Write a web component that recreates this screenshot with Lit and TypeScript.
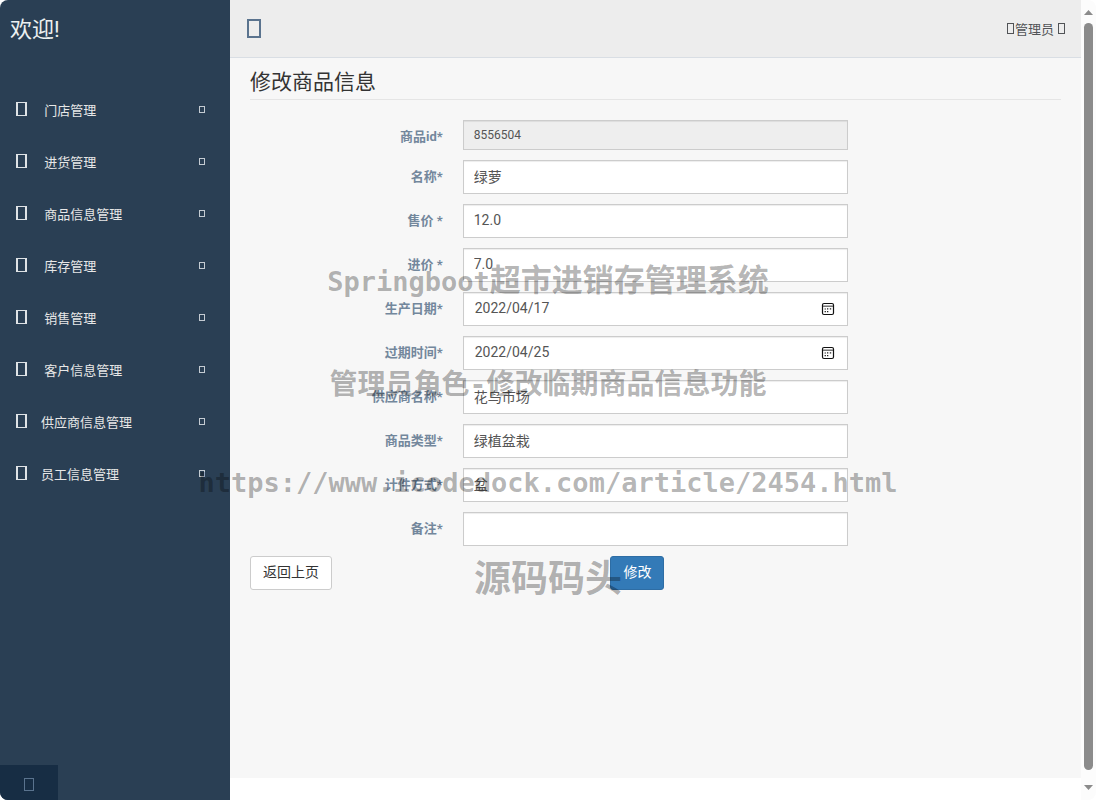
import { LitElement, html, css } from "lit";
import { customElement } from "lit/decorators.js";

interface Field {
  id: string;
  label: string;
  value: string;
  kind?: "readonly" | "date";
}

const MENU: string[] = [
  "\u00a0门店管理",
  "\u00a0进货管理",
  "\u00a0商品信息管理",
  "\u00a0库存管理",
  "\u00a0销售管理",
  "\u00a0客户信息管理",
  "供应商信息管理",
  "员工信息管理",
];

const FIELDS: Field[] = [
  { id: "goods-id", label: "商品id*", value: "8556504", kind: "readonly" },
  { id: "name", label: "名称*", value: "绿萝" },
  { id: "price", label: "售价 *", value: "12.0" },
  { id: "cost", label: "进价 *", value: "7.0" },
  { id: "made", label: "生产日期*", value: "2022/04/17", kind: "date" },
  { id: "expires", label: "过期时间*", value: "2022/04/25", kind: "date" },
  { id: "supplier", label: "供应商名称*", value: "花鸟市场" },
  { id: "category", label: "商品类型*", value: "绿植盆栽" },
  { id: "unit", label: "计件方式*", value: "盆" },
  { id: "remark", label: "备注*", value: "" },
];

const calendarIcon = html`<svg width="14" height="14" viewBox="0 0 14 14" aria-hidden="true">
  <rect x="1.5" y="1.5" width="11" height="11" rx="1.5" fill="none" stroke="#111" stroke-width="1.2" />
  <path d="M2 4.2h10" stroke="#666" stroke-width="1.4" />
  <path
    d="M6 6.2h1.3v1.3H6zM8.8 6.2h1.4v1.4H8.8zM3.6 6.4h1.3v1.1H3.6zM3.6 9h1.3v1.3H3.6zM6 9h1.3v1.3H6z"
    fill="#222"
  />
</svg>`;

@customElement("side-menu")
export class SideMenu extends LitElement {
  static styles = css`
    :host {
      display: flex;
      flex-direction: column;
      background: #2a3f54;
      color: #ecf0f1;
    }
    .brand {
      height: 58px;
      padding-left: 10px;
      font-size: 22px;
      line-height: 60px;
    }
    .menu {
      list-style: none;
      margin: 0;
      padding: 25px 0 0;
      flex: 1;
    }
    .link {
      display: flex;
      align-items: center;
      height: 52px;
      padding: 0 25px 0 16px;
      box-sizing: border-box;
      color: #e7e7e7;
      font-size: 13px;
      text-decoration: none;
    }
    .text {
      flex: 1;
      padding-left: 14px;
    }
    .glyph {
      box-sizing: border-box;
      width: 11px;
      height: 14px;
      border: 1px solid #dfe3e6;
      border-width: 1px 2px;
    }
    .caret {
      box-sizing: border-box;
      width: 6px;
      height: 7px;
      border: 1px solid #c4cbd2;
    }
    .tool {
      display: flex;
      align-items: center;
      justify-content: center;
      width: 25%;
      height: 35px;
      padding: 3px 0 0;
      border: 0;
      background: #172d44;
    }
    .tool-glyph {
      box-sizing: border-box;
      width: 10px;
      height: 13px;
      border: 1px solid #5a738e;
    }
  `;

  render() {
    return html`
      <div class="brand">欢迎!</div>
      <ul class="menu">
        ${MENU.map(
          (item) => html`<li>
            <a class="link" href="#"><span class="glyph"></span><span class="text">${item}</span><span class="caret"></span></a>
          </li>`
        )}
      </ul>
      <button class="tool" type="button" aria-label="退出"><span class="tool-glyph"></span></button>
    `;
  }
}

@customElement("goods-form")
export class GoodsForm extends LitElement {
  static styles = css`
    :host {
      display: block;
      padding: 0 20px;
    }
    .title {
      margin: 0 0 20px;
      padding: 8px 0 0;
      height: 33px;
      border-bottom: 1px solid #e5e5e5;
      color: #333;
      font-size: 21px;
      font-weight: 400;
      line-height: 32px;
    }
    .form {
      display: grid;
      gap: 10px;
    }
    .row {
      display: grid;
      grid-template-columns: 1fr 2fr 1fr;
    }
    .label {
      padding: 8px 10px 0;
      color: #73879c;
      font-size: 13px;
      font-weight: 700;
      line-height: 18px;
      text-align: right;
    }
    .control {
      display: grid;
      grid-template-columns: 1fr 40px;
      padding: 0 10px;
    }
    .input {
      grid-area: 1 / 1 / 2 / 3;
      box-sizing: border-box;
      width: 100%;
      height: 34px;
      margin: 0;
      padding: 0 10px 2px;
      border: 1px solid #ccc;
      border-radius: 0;
      background: #fff;
      box-shadow: inset 0 1px 1px rgba(0, 0, 0, 0.075);
      color: #555;
      font: inherit;
      font-size: 14px;
      line-height: 20px;
    }
    .readonly {
      height: 30px;
      padding-bottom: 0;
      background: #eee;
      font-size: 12px;
    }
    .date {
      padding-left: 11px;
    }
    .pick {
      grid-area: 1 / 2;
      z-index: 1;
      display: flex;
      align-items: center;
      justify-content: center;
      padding: 0;
      border: 0;
      background: none;
    }
    .actions {
      display: grid;
      grid-template-columns: 4fr 5fr;
      justify-items: start;
    }
    .button {
      height: 34px;
      padding: 0 12px 2px;
      border: 1px solid #ccc;
      border-radius: 3px;
      background: #fff;
      color: #333;
      font: inherit;
      font-size: 14px;
      line-height: 20px;
    }
    .primary {
      border-color: #2e6da4;
      background: #337ab7;
      color: #fff;
    }
  `;

  private field(f: Field) {
    return html`<div class="row">
      <label class="label" for=${f.id}>${f.label}</label>
      <div class="control">
        <input class="input ${f.kind ?? ""}" id=${f.id} type="text" .value=${f.value} ?readonly=${f.kind === "readonly"} />
        ${f.kind === "date"
          ? html`<button class="pick" type="button" aria-label="选择日期">${calendarIcon}</button>`
          : ""}
      </div>
    </div>`;
  }

  render() {
    return html`
      <h2 class="title">修改商品信息</h2>
      <form class="form">
        ${FIELDS.map((f) => this.field(f))}
        <div class="actions">
          <button class="button" type="button">返回上页</button>
          <button class="button primary" type="button">修改</button>
        </div>
      </form>
    `;
  }
}

@customElement("app-root")
export class AppRoot extends LitElement {
  static styles = css`
    :host {
      position: relative;
      display: grid;
      grid-template-columns: 230px 1fr 15px;
      min-height: 100vh;
      overflow: hidden;
      border-radius: 8px;
      background: #fff;
      font-family: Roboto, "Noto Sans CJK SC", sans-serif;
      font-size: 13px;
    }
    .main {
      margin-bottom: 22px;
      background: #f7f7f7;
    }
    .top {
      display: flex;
      align-items: center;
      justify-content: space-between;
      box-sizing: border-box;
      height: 58px;
      padding: 0 16px 0 17px;
      border-bottom: 1px solid #d9dee4;
      background: #ededed;
    }
    .toggle {
      width: 14px;
      height: 19px;
      padding: 0;
      border: 2px solid #5a738e;
      background: none;
    }
    .user {
      display: flex;
      align-items: center;
      color: #515356;
      font-size: 13px;
      text-decoration: none;
    }
    .box {
      box-sizing: border-box;
      width: 7px;
      height: 11px;
      border: 1px solid #515356;
    }
    .user-name {
      padding: 0 4px 0 1px;
    }
    .scroll {
      display: flex;
      flex-direction: column;
      align-items: center;
      gap: 8px;
      padding: 10px 0;
      background: #fcfcfc;
    }
    .thumb {
      flex: 1;
      width: 9px;
      margin-bottom: 7px;
      border-radius: 5px;
      background: #8b8b8b;
    }
    .arrow {
      display: block;
    }
    .watermark {
      position: absolute;
      inset: 0;
      z-index: 2;
      padding-top: 231px;
      color: rgba(0, 0, 0, 0.3);
      font-family: "DejaVu Sans Mono", "Noto Sans CJK SC", monospace;
      font-weight: 700;
      line-height: 98px;
      text-align: center;
      white-space: nowrap;
      pointer-events: none;
    }
    .mark {
      margin: 0;
    }
    .latin {
      font-size: 27px;
    }
    .large {
      font-size: 31px;
    }
    .medium {
      font-size: 28px;
    }
    .huge {
      font-size: 37px;
      line-height: 96px;
    }
  `;

  render() {
    return html`
      <side-menu></side-menu>
      <main class="main">
        <header class="top">
          <button class="toggle" type="button" aria-label="菜单"></button>
          <a class="user" href="#"><span class="box"></span><span class="user-name">管理员</span><span class="box"></span></a>
        </header>
        <goods-form></goods-form>
      </main>
      <div class="scroll" aria-hidden="true">
        <svg class="arrow" width="9" height="5" viewBox="0 0 9 5"><path d="M4.5 0L9 5H0z" fill="#8b8b8b" /></svg>
        <div class="thumb"></div>
        <svg class="arrow" width="9" height="5" viewBox="0 0 9 5"><path d="M4.5 5L9 0H0z" fill="#8b8b8b" /></svg>
      </div>
      <div class="watermark">
        <p class="mark"><span class="latin">Springboot</span><span class="large">超市进销存管理系统</span></p>
        <p class="mark medium">管理员角色-修改临期商品信息功能</p>
        <p class="mark latin">https://www.icodedock.com/article/2454.html</p>
        <p class="mark huge">源码码头</p>
      </div>
    `;
  }
}
